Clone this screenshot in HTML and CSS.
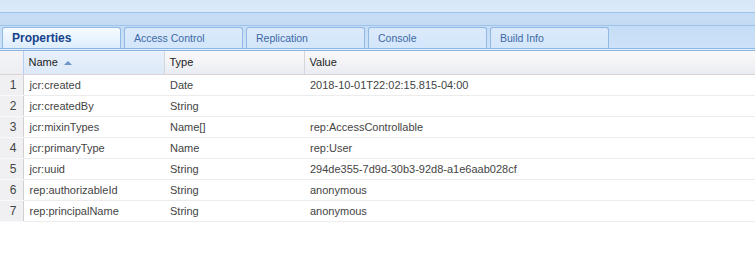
FILE: index.html
```html
<!DOCTYPE html>
<html lang="en">
<head>
    <meta charset="UTF-8">
    <title>Properties</title>
    <link rel="stylesheet" href="styles.css">
</head>
<body>
    <!-- top toolbar -->
    <div class="toolbar"></div>
    <div class="band"></div>
    <!-- tabs -->
    <div class="tabstrip">
        <div class="tab active">Properties</div>
        <div class="tab">Access Control</div>
        <div class="tab">Replication</div>
        <div class="tab">Console</div>
        <div class="tab">Build Info</div>
    </div>
    <div class="spacer"></div>
    <!-- property grid -->
    <table class="grid">
        <thead>
            <tr>
                <th class="num"></th>
                <th class="col-name sorted">Name <span class="arrow"></span></th>
                <th class="col-type">Type</th>
                <th class="col-value">Value</th>
            </tr>
        </thead>
        <tbody>
            <tr><td class="num">1</td><td>jcr:created</td><td>Date</td><td>2018-10-01T22:02:15.815-04:00</td></tr>
            <tr><td class="num">2</td><td>jcr:createdBy</td><td>String</td><td></td></tr>
            <tr><td class="num">3</td><td>jcr:mixinTypes</td><td>Name[]</td><td>rep:AccessControllable</td></tr>
            <tr><td class="num">4</td><td>jcr:primaryType</td><td>Name</td><td>rep:User</td></tr>
            <tr><td class="num">5</td><td>jcr:uuid</td><td>String</td><td>294de355-7d9d-30b3-92d8-a1e6aab028cf</td></tr>
            <tr><td class="num">6</td><td>rep:authorizableId</td><td>String</td><td>anonymous</td></tr>
            <tr><td class="num">7</td><td>rep:principalName</td><td>String</td><td>anonymous</td></tr>
        </tbody>
    </table>
</body>
</html>
```

FILE: styles.css
```css
body {
    margin: 0;
    background-color: #ffffff;
    font-family: "Liberation Sans", Arial, sans-serif;
}
.toolbar {
    height: 12px;
    background: linear-gradient(to bottom, #d6e7f8, #dbeaf9);
    border-bottom: 1px solid #9fc4ea;
}
.band {
    height: 12px;
    background: linear-gradient(to bottom, #c6def5, #c2dbf3);
    border-bottom: 1px solid #9ec3ea;
}
.tabstrip {
    display: flex;
    gap: 3px;
    height: 21px;
    padding: 1px 0 0 2px;
    background: linear-gradient(to bottom, #c4dcf5, #cde2f8);
    border-bottom: 1px solid #8fb6e3;
}
.tab {
    width: 108px;
    height: 20px;
    padding-left: 9px;
    border: 1px solid #92b8e4;
    border-bottom: none;
    border-radius: 3px 3px 0 0;
    background: linear-gradient(to bottom, #dbeafb, #d3e6fa);
    color: #3c68a6;
    font-size: 10.5px;
    line-height: 21px;
}
.tab.active {
    background: linear-gradient(to bottom, #f6fbff, #ddedfd);
    color: #15428b;
    font-weight: bold;
    font-size: 12px;
}
.spacer {
    height: 1px;
    background-color: #ddeefd;
    border-bottom: 1px solid #8fb6e3;
}
.grid {
    width: 100%;
    border-collapse: collapse;
    table-layout: fixed;
    font-size: 11px;
}
.grid th,
.grid td {
    box-sizing: border-box;
}
.grid th {
    height: 23px;
    padding: 0 0 0 5px;
    text-align: left;
    font-weight: normal;
    color: #222222;
    background: linear-gradient(to bottom, #f8f8fa, #f4f4f7 45%, #e9ecf3);
    border-left: 1px solid #d4d6dc;
    border-bottom: 1px solid #dcd2d6;
}
.grid th.num {
    border-left: none;
    background: linear-gradient(to bottom, #f4f4f6, #eceef3);
}
.grid th.sorted {
    background: linear-gradient(to bottom, #e8f1fc, #dde9f8);
    border-left: 1px solid #b8d0ef;
}
.num { width: 23px; }
.col-name { width: 141px; }
.col-type { width: 140px; }
.arrow {
    display: inline-block;
    width: 0;
    height: 0;
    margin-left: 3px;
    vertical-align: 1px;
    border-left: 4px solid transparent;
    border-right: 4px solid transparent;
    border-bottom: 4px solid #6d95cc;
}
.grid td {
    height: 21px;
    padding: 0 0 0 6px;
    color: #444444;
    white-space: nowrap;
    overflow: hidden;
    border-bottom: 1px solid #ececec;
}
.grid td.num {
    padding: 0 6px 0 0;
    text-align: right;
    font-size: 12px;
    color: #444444;
    background-color: #f0f0f2;
    border-right: 1px solid #d0d0d4;
    border-bottom: 1px solid #f8f8f8;
}
```
